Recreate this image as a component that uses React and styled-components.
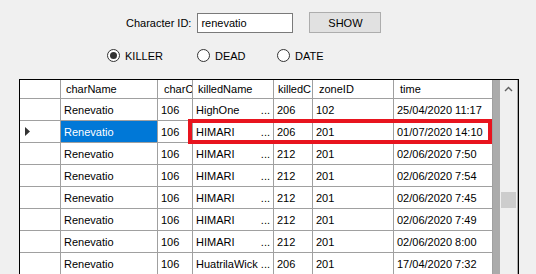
import React from "react";
import styled, { createGlobalStyle } from "styled-components";

const GlobalStyle = createGlobalStyle`
  html, body {
    margin: 0;
    padding: 0;
    background: #f0f0f0;
    overflow: hidden;
  }
  body {
    font-family: "Liberation Sans", Arial, sans-serif;
    font-size: 11px;
    color: #000;
  }
`;

const COLS = "41px 97px 35px 81px 39px 81px 99px";

const rows = [
  { name: "Renevatio", charC: "106", killed: "HighOne", killedC: "206", zone: "102", time: "25/04/2020 11:17" },
  { name: "Renevatio", charC: "106", killed: "HIMARI", killedC: "206", zone: "201", time: "01/07/2020 14:10", current: true },
  { name: "Renevatio", charC: "106", killed: "HIMARI", killedC: "212", zone: "201", time: "02/06/2020 7:50" },
  { name: "Renevatio", charC: "106", killed: "HIMARI", killedC: "212", zone: "201", time: "02/06/2020 7:54" },
  { name: "Renevatio", charC: "106", killed: "HIMARI", killedC: "212", zone: "201", time: "02/06/2020 7:45" },
  { name: "Renevatio", charC: "106", killed: "HIMARI", killedC: "212", zone: "201", time: "02/06/2020 7:49" },
  { name: "Renevatio", charC: "106", killed: "HIMARI", killedC: "212", zone: "201", time: "02/06/2020 8:00" },
  { name: "Renevatio", charC: "106", killed: "HuatrilaWick", killedC: "206", zone: "201", time: "17/04/2020 7:32" },
];

const Window = styled.div`
  width: 536px;
  height: 274px;
  display: flex;
  flex-direction: column;
  overflow: hidden;
`;

const SearchRow = styled.div`
  display: flex;
  align-items: center;
  height: 21px;
  margin-top: 12px;
  padding-left: 126px;
`;

const Label = styled.span`
  white-space: nowrap;
  margin-right: 6px;
`;

const TextBox = styled.div`
  box-sizing: border-box;
  width: 96px;
  height: 20px;
  border: 1px solid #7a7a7a;
  background: #fff;
  padding: 2px 3px;
  line-height: 14px;
`;

const Button = styled.div`
  box-sizing: border-box;
  width: 72px;
  height: 21px;
  margin-left: 16px;
  background: #e1e1e1;
  border: 1px solid #adadad;
  display: flex;
  align-items: center;
  justify-content: center;
`;

const RadioRow = styled.div`
  display: flex;
  align-items: center;
  margin-top: 16px;
  padding-left: 107px;
`;

const Radio = styled.div`
  display: flex;
  align-items: center;
  width: ${(p) => p.$w}px;
`;

const Circle = styled.span`
  box-sizing: border-box;
  width: 13px;
  height: 13px;
  border-radius: 50%;
  border: 1px solid #333;
  background: #fff;
  margin-right: 5px;
  display: flex;
  align-items: center;
  justify-content: center;

  &::after {
    content: "";
    width: 7px;
    height: 7px;
    border-radius: 50%;
    background: ${(p) => (p.$on ? "#333" : "transparent")};
  }
`;

const GridFrame = styled.div`
  position: relative;
  margin-top: 17px;
  margin-left: 19px;
  width: 498px;
  flex: 1;
  border: 1px solid #000;
  border-bottom: none;
  display: flex;
  background: #ababab;
`;

const Table = styled.div`
  width: 473px;
  background: #ababab;
`;

const Row = styled.div`
  display: grid;
  grid-template-columns: ${COLS};
  height: ${(p) => p.$h}px;
`;

const Cell = styled.div`
  box-sizing: border-box;
  border-right: 1px solid #a0a0a0;
  border-bottom: 1px solid #a0a0a0;
  background: ${(p) => (p.$current ? "#0078d7" : "#fff")};
  color: ${(p) => (p.$current ? "#fff" : "#000")};
  padding: 0 3px 0 ${(p) => (p.$head ? 5 : 3)}px;
  display: flex;
  align-items: center;
  justify-content: ${(p) => (p.$spread ? "space-between" : "flex-start")};
  white-space: nowrap;
  overflow: hidden;
`;

const HeaderCell = styled(Cell)`
  padding-left: ${(p) => p.$pl ?? 5}px;
`;

const Gap = styled.div`
  width: 7px;
  background: #ababab;
`;

const ScrollBar = styled.div`
  width: 17px;
  background: #f0f0f0;
  display: flex;
  flex-direction: column;
  align-items: center;
`;

const ArrowBox = styled.div`
  height: 17px;
  width: 17px;
  display: flex;
  align-items: center;
  justify-content: center;
`;

const Thumb = styled.div`
  width: 15px;
  height: 16px;
  margin-top: 95px;
  background: #cdcdcd;
`;

const Highlight = styled.div`
  position: absolute;
  left: 168px;
  top: 39px;
  width: 304px;
  height: 25px;
  box-sizing: border-box;
  border: 4px solid #e8141e;
  pointer-events: none;
`;

export default function App() {
  return (
    <Window>
      <GlobalStyle />
      <SearchRow>
        <Label>Character ID:</Label>
        <TextBox>renevatio</TextBox>
        <Button>SHOW</Button>
      </SearchRow>
      <RadioRow>
        <Radio $w={90}>
          <Circle $on />
          KILLER
        </Radio>
        <Radio $w={80}>
          <Circle />
          DEAD
        </Radio>
        <Radio $w={80}>
          <Circle />
          DATE
        </Radio>
      </RadioRow>
      <GridFrame>
        <Table>
          <Row $h={19}>
            <HeaderCell />
            <HeaderCell>charName</HeaderCell>
            <HeaderCell $pl={6}>charC</HeaderCell>
            <HeaderCell>killedName</HeaderCell>
            <HeaderCell $pl={4}>killedC</HeaderCell>
            <HeaderCell $pl={6}>zoneID</HeaderCell>
            <HeaderCell $pl={6}>time</HeaderCell>
          </Row>
          {rows.map((r, i) => (
            <Row $h={22} key={i}>
              <Cell $head>
                {r.current && (
                  <svg width="5" height="9" viewBox="0 0 5 9">
                    <path d="M0 0 L5 4.5 L0 9 Z" fill="#333" />
                  </svg>
                )}
              </Cell>
              <Cell $current={r.current}>{r.name}</Cell>
              <Cell>{r.charC}</Cell>
              <Cell $spread>
                <span>{r.killed}</span>
                <span>...</span>
              </Cell>
              <Cell>{r.killedC}</Cell>
              <Cell>{r.zone}</Cell>
              <Cell>{r.time}</Cell>
            </Row>
          ))}
        </Table>
        <Gap />
        <ScrollBar>
          <ArrowBox>
            <svg width="9" height="6" viewBox="0 0 9 6">
              <path d="M1 5 L4.5 1.5 L8 5" stroke="#606060" strokeWidth="1.4" fill="none" />
            </svg>
          </ArrowBox>
          <Thumb />
        </ScrollBar>
        <Highlight />
      </GridFrame>
    </Window>
  );
}
